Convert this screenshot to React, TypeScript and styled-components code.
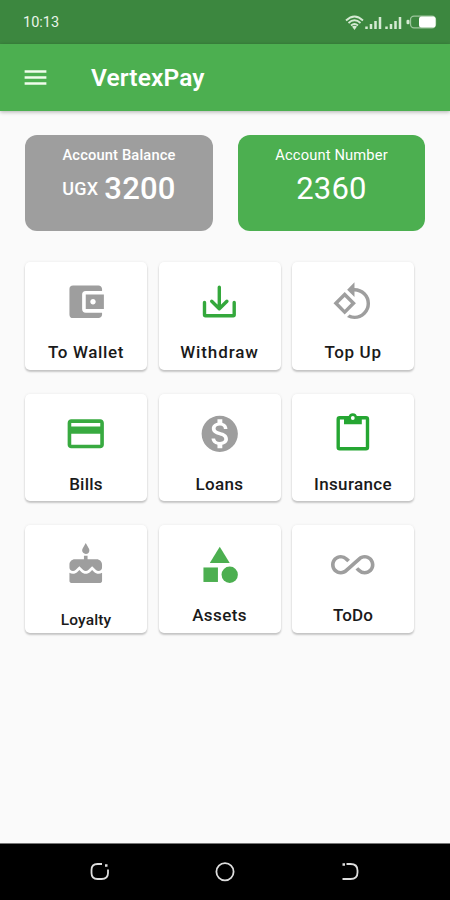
import React from 'react';
import styled, { createGlobalStyle } from 'styled-components';
import {
  MdAccountBalanceWallet,
  MdAllInclusive,
  MdCake,
  MdCategory,
  MdMenu,
  MdMonetizationOn,
  MdPayment,
  MdRotate90DegreesCcw,
} from 'react-icons/md';

const GREEN = '#4caf50';
const GREY = '#9e9e9e';

const GlobalStyle = createGlobalStyle`
  * { box-sizing: border-box; }
  body { margin: 0; background: #fafafa; font-family: Roboto, "Liberation Sans", sans-serif; }
`;

const Screen = styled.div`
  width: 450px;
  height: 900px;
  display: flex;
  flex-direction: column;
  overflow: hidden;
  background: #fafafa;
`;

const StatusBar = styled.div`
  height: 44px;
  flex: none;
  display: flex;
  align-items: center;
  justify-content: space-between;
  padding: 1px 13px 0 23px;
  background: #3c873f;
  color: #e9f5e9;
`;

const Clock = styled.span`
  padding-top: 1px;
  font-size: 14.5px;
  line-height: 20px;
`;

const StatusIcons = styled.svg`
  display: block;
  width: 92px;
  height: 20px;
`;

const AppBar = styled.header`
  height: 67px;
  flex: none;
  display: flex;
  align-items: center;
  gap: 41px;
  padding: 0 21px;
  background: ${GREEN};
  color: #f0fdec;
  box-shadow: 0 1px 4px rgba(0, 0, 0, 0.3);
`;

const MenuButton = styled.button`
  display: flex;
  border: 0;
  padding: 0;
  background: none;
  color: inherit;
  font-size: 29px;
`;

const Title = styled.h1`
  margin: 0;
  font-size: 24.5px;
  line-height: 30px;
  font-weight: 600;
  letter-spacing: 0.12px;
  color: #fff;
`;

const Content = styled.main`
  flex: 1;
  padding: 24px 25px 0;
`;

const Accounts = styled.section`
  display: grid;
  grid-template-columns: 188px 187px;
  justify-content: space-between;
`;

const AccountCard = styled.div<{ $color: string }>`
  height: 96px;
  display: flex;
  flex-direction: column;
  align-items: center;
  padding-top: 10px;
  border-radius: 12px;
  background: ${(p) => p.$color};
  color: #fff;
`;

const AccountLabel = styled.div<{ $weight: number }>`
  font-size: 14.7px;
  line-height: 20px;
  font-weight: ${(p) => p.$weight};
  letter-spacing: 0.15px;
`;

const AccountValue = styled.div<{ $weight: number }>`
  display: flex;
  align-items: center;
  gap: 6px;
  margin-top: 6px;
  font-size: 31px;
  line-height: 36px;
  font-weight: ${(p) => p.$weight};
  letter-spacing: 0.2px;
`;

const Currency = styled.span`
  font-size: 18px;
  font-weight: 500;
`;

const Tiles = styled.section`
  display: grid;
  grid-template-columns: repeat(3, 122px);
  grid-auto-rows: 107.5px;
  column-gap: 11.5px;
  row-gap: 24px;
  margin-top: 31px;
`;

const Tile = styled.button`
  display: flex;
  flex-direction: column;
  align-items: center;
  padding: 18px 0 0;
  border: 0;
  border-radius: 5px;
  background: #fff;
  font-family: inherit;
  box-shadow: 0 2px 2px rgba(0, 0, 0, 0.2), 0 0 3px rgba(0, 0, 0, 0.07);
`;

const TileIcon = styled.span<{ $color: string; $size?: number }>`
  height: 44px;
  display: flex;
  align-items: center;
  justify-content: center;
  color: ${(p) => p.$color};
  font-size: ${(p) => p.$size ?? 43.5}px;
`;

const TileLabel = styled.span<{ $small?: boolean; $tracking: number }>`
  margin-top: ${(p) => (p.$small ? 22 : 17)}px;
  font-size: ${(p) => (p.$small ? 15.5 : 17)}px;
  line-height: 22px;
  font-weight: 500;
  letter-spacing: ${(p) => p.$tracking}px;
  color: #1a1a1a;
`;

const NavBar = styled.nav`
  height: 57px;
  flex: none;
  display: flex;
  justify-content: center;
  align-items: center;
  gap: 105px;
  border-top: 1px solid #777;
  background: #000;
`;

const NavIcon = styled.svg`
  display: block;
  width: 20px;
  height: 20px;
  fill: none;
  stroke: #dedede;
  stroke-width: 1.8;
`;

const WithdrawIcon = () => (
  <svg width="44" height="44" viewBox="0 0 44 44" fill="none" stroke="currentColor" strokeWidth="3.4" strokeLinecap="round" strokeLinejoin="round">
    <path d="M6.500 22.500V34.700Q6.500 35.700 7.500 35.700H35.200Q36.200 35.700 36.200 34.700V22.500" />
    <path d="M21.300 7.300V28M13.700 21.200L21.300 28.800L28.900 21.200" />
  </svg>
);

const ClipboardIcon = () => (
  <svg width="44" height="44" viewBox="0 0 44 44" fill="none" stroke="currentColor" strokeWidth="3.4" strokeLinejoin="round">
    <rect x="7.200" y="5.800" width="29.300" height="31" rx="1.500" />
    <path d="M13 5.500H17.300Q18 1.200 21.800 1.200T26.300 5.500H30.800V12.300H13Z" fill="currentColor" stroke="none" />
    <circle cx="21.800" cy="6" r="1.900" fill="#fff" stroke="none" />
  </svg>
);

type TileData = {
  label: string;
  icon: React.ReactNode;
  color: string;
  tracking: number;
  size?: number;
  small?: boolean;
};

const tiles: TileData[] = [
  { label: 'To Wallet', icon: <MdAccountBalanceWallet />, color: GREY, tracking: 0.65 },
  { label: 'Withdraw', icon: <WithdrawIcon />, color: '#34a83c', tracking: 0.9 },
  { label: 'Top Up', icon: <MdRotate90DegreesCcw />, color: GREY, tracking: 0.65, size: 41.5 },
  { label: 'Bills', icon: <MdPayment />, color: '#38aa40', tracking: 0.25 },
  { label: 'Loans', icon: <MdMonetizationOn />, color: GREY, tracking: 0.35 },
  { label: 'Insurance', icon: <ClipboardIcon />, color: '#25a632', tracking: 0.35 },
  { label: 'Loyalty', icon: <MdCake />, color: GREY, tracking: 0.1, small: true },
  { label: 'Assets', icon: <MdCategory />, color: GREEN, tracking: 0.4 },
  { label: 'ToDo', icon: <MdAllInclusive />, color: GREY, tracking: 0.1 },
];

export default function App() {
  return (
    <Screen>
      <GlobalStyle />
      <StatusBar>
        <Clock>10:13</Clock>
        <StatusIcons viewBox="0 0 92 20" fill="none" stroke="#d5ead3">
          <path d="M1 7.5Q9.500 -0.500 18 7.500M3.500 10Q9.500 4.500 15.500 10M6 12.500Q9.500 9.500 13 12.500" strokeWidth="1.8" />
          <path d="M7 13.500Q9.500 12 12 13.500L9.500 17Z" fill="#d5ead3" stroke="none" />
          <path d="M21.500 16V13.500M26 16V11M30.500 16V8M35 16V4M41.500 16V13.500M46 16V11M50.500 16V8M55 16V4" strokeWidth="2.500" />
          <rect x="65.500" y="3.200" width="25" height="11.600" rx="3.500" stroke="#9dc69d" strokeWidth="1.300" />
          <rect x="74" y="3.500" width="16.500" height="11" rx="2.500" fill="#fff" stroke="none" />
          <rect x="61.500" y="6.800" width="3" height="4.500" rx="1.300" fill="#d5ead3" stroke="none" />
        </StatusIcons>
      </StatusBar>
      <AppBar>
        <MenuButton aria-label="Menu"><MdMenu /></MenuButton>
        <Title>VertexPay</Title>
      </AppBar>
      <Content>
        <Accounts>
          <AccountCard $color={GREY}>
            <AccountLabel $weight={500}>Account Balance</AccountLabel>
            <AccountValue $weight={500}>
              <Currency>UGX</Currency>
              <span>3200</span>
            </AccountValue>
          </AccountCard>
          <AccountCard $color={GREEN}>
            <AccountLabel $weight={400}>Account Number</AccountLabel>
            <AccountValue $weight={400}>2360</AccountValue>
          </AccountCard>
        </Accounts>
        <Tiles>
          {tiles.map((t) => (
            <Tile key={t.label}>
              <TileIcon $color={t.color} $size={t.size}>{t.icon}</TileIcon>
              <TileLabel $small={t.small} $tracking={t.tracking}>{t.label}</TileLabel>
            </Tile>
          ))}
        </Tiles>
      </Content>
      <NavBar>
        <NavIcon viewBox="0 0 20 20">
          <path d="M12 2H7.500Q1.500 2 1.500 8V11Q1.500 17 7.500 17H11.500Q18 17 18 11V7.500" />
          <path d="M15 3.500H17.500" strokeWidth="2.500" />
        </NavIcon>
        <NavIcon viewBox="0 0 20 20">
          <circle cx="10" cy="9.700" r="8.600" />
        </NavIcon>
        <NavIcon viewBox="0 0 20 20">
          <path d="M6.500 2H10.500Q17.500 2 17.500 8.500V10.500Q17.500 17 10.500 17H2.500" />
          <path d="M2.500 2.500H5" strokeWidth="2.500" />
        </NavIcon>
      </NavBar>
    </Screen>
  );
}
